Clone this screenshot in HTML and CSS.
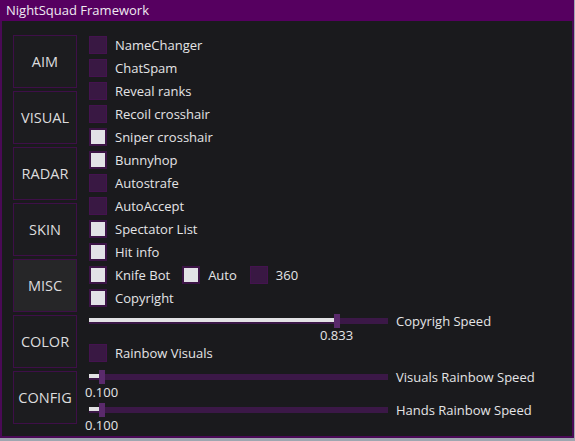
FILE: index.html
```html
<!DOCTYPE html>
<html>
<head>
<meta charset="utf-8">
<link rel="stylesheet" href="styles.css">
</head>
<body>
<div class="window">
  <div class="titlebar">NightSquad Framework</div>
  <div class="content">
    <div class="tabs">
      <div class="tab">AIM</div>
      <div class="tab">VISUAL</div>
      <div class="tab">RADAR</div>
      <div class="tab">SKIN</div>
      <div class="tab active">MISC</div>
      <div class="tab">COLOR</div>
      <div class="tab">CONFIG</div>
    </div>
    <div class="panel">
      <div class="row"><span class="cb"></span><span class="lbl">NameChanger</span></div>
      <div class="row"><span class="cb"></span><span class="lbl">ChatSpam</span></div>
      <div class="row"><span class="cb"></span><span class="lbl">Reveal ranks</span></div>
      <div class="row"><span class="cb"></span><span class="lbl">Recoil crosshair</span></div>
      <div class="row"><span class="cb on"></span><span class="lbl">Sniper crosshair</span></div>
      <div class="row"><span class="cb on"></span><span class="lbl">Bunnyhop</span></div>
      <div class="row"><span class="cb"></span><span class="lbl">Autostrafe</span></div>
      <div class="row"><span class="cb"></span><span class="lbl">AutoAccept</span></div>
      <div class="row"><span class="cb on"></span><span class="lbl">Spectator List</span></div>
      <div class="row"><span class="cb on"></span><span class="lbl">Hit info</span></div>
      <div class="row">
        <span class="cb on"></span><span class="lbl">Knife Bot</span>
        <span class="cb on gap1"></span><span class="lbl">Auto</span>
        <span class="cb gap2"></span><span class="lbl">360</span>
      </div>
      <div class="row"><span class="cb on"></span><span class="lbl">Copyright</span></div>

      <div class="slider s1">
        <div class="track">
          <div class="fill" style="width:245px"></div>
          <div class="grab" style="left:245px"></div>
        </div>
        <span class="slbl">Copyrigh Speed</span>
      </div>
      <div class="val v1" style="margin-left:231px">0.833</div>

      <div class="row rv"><span class="cb"></span><span class="lbl">Rainbow Visuals</span></div>

      <div class="slider s2">
        <div class="track">
          <div class="fill" style="width:10px"></div>
          <div class="grab" style="left:10px"></div>
        </div>
        <span class="slbl">Visuals Rainbow Speed</span>
      </div>
      <div class="val" style="margin-left:-4px">0.100</div>

      <div class="slider s3">
        <div class="track">
          <div class="fill" style="width:10px"></div>
          <div class="grab" style="left:10px"></div>
        </div>
        <span class="slbl">Hands Rainbow Speed</span>
      </div>
      <div class="val" style="margin-left:-4px">0.100</div>
    </div>
  </div>
</div>
</body>
</html>
```

FILE: styles.css
```css
html, body {
  margin: 0;
  padding: 0;
  background: #9ea6b0;
}
body {
  width: 575px;
  height: 441px;
  overflow: hidden;
  font-family: "Open Sans", "Noto Sans", sans-serif;
  font-size: 13px;
  color: #e4e4e6;
}
.window {
  width: 574px;
  height: 438px;
  display: flex;
  flex-direction: column;
  background: #1a1a1d;
}
.titlebar {
  height: 21px;
  line-height: 21px;
  background: #560060;
  padding-left: 6px;
  color: #f0eaf2;
  font-size: 13px;
  flex: none;
}
.content {
  flex: 1;
  display: flex;
  border: 2px solid #4a0a56;
  border-top: 0;
  padding: 14px 0 0 11px;
  gap: 12px;
}
.tabs {
  display: flex;
  flex-direction: column;
  gap: 3px;
}
.tab {
  width: 64px;
  height: 53px;
  box-sizing: border-box;
  border: 1px solid #3e0f48;
  background: #1c1c1f;
  display: flex;
  align-items: center;
  justify-content: center;
  font-size: 14.5px;
  color: #dcdcde;
}
.tab.active {
  background: #262628;
}
.panel {
  display: flex;
  flex-direction: column;
  padding-top: 1px;
}
.row {
  display: flex;
  align-items: center;
  height: 18px;
  margin-bottom: 5px;
}
.cb {
  width: 18px;
  height: 18px;
  box-sizing: border-box;
  background: #391843;
  border: 1px solid #44134f;
  flex: none;
}
.cb.on {
  background: #e2e2e6;
  border: 2px solid #3c1446;
}
.lbl {
  margin-left: 8px;
  white-space: nowrap;
}
.gap1 { margin-left: 12px; }
.gap2 { margin-left: 13px; }
.slider {
  display: flex;
  align-items: center;
  height: 14px;
}
.s1 { margin-top: 2px; }
.s2 { margin-top: 8px; }
.s3 { margin-top: 3px; }
.track {
  position: relative;
  width: 299px;
  height: 6px;
  background: #3b1847;
  flex: none;
}
.fill {
  height: 4px;
  background: #e2e2e4;
}
.grab {
  position: absolute;
  top: -4px;
  width: 6px;
  height: 14px;
  background: #5a2a6c;
}
.slbl {
  margin-left: 8px;
  white-space: nowrap;
}
.val {
  height: 16px;
  line-height: 16px;
}
.val.v1 {
  height: 14px;
  line-height: 14px;
}
.rv {
  margin-top: 2px;
  margin-bottom: 0;
}
```
